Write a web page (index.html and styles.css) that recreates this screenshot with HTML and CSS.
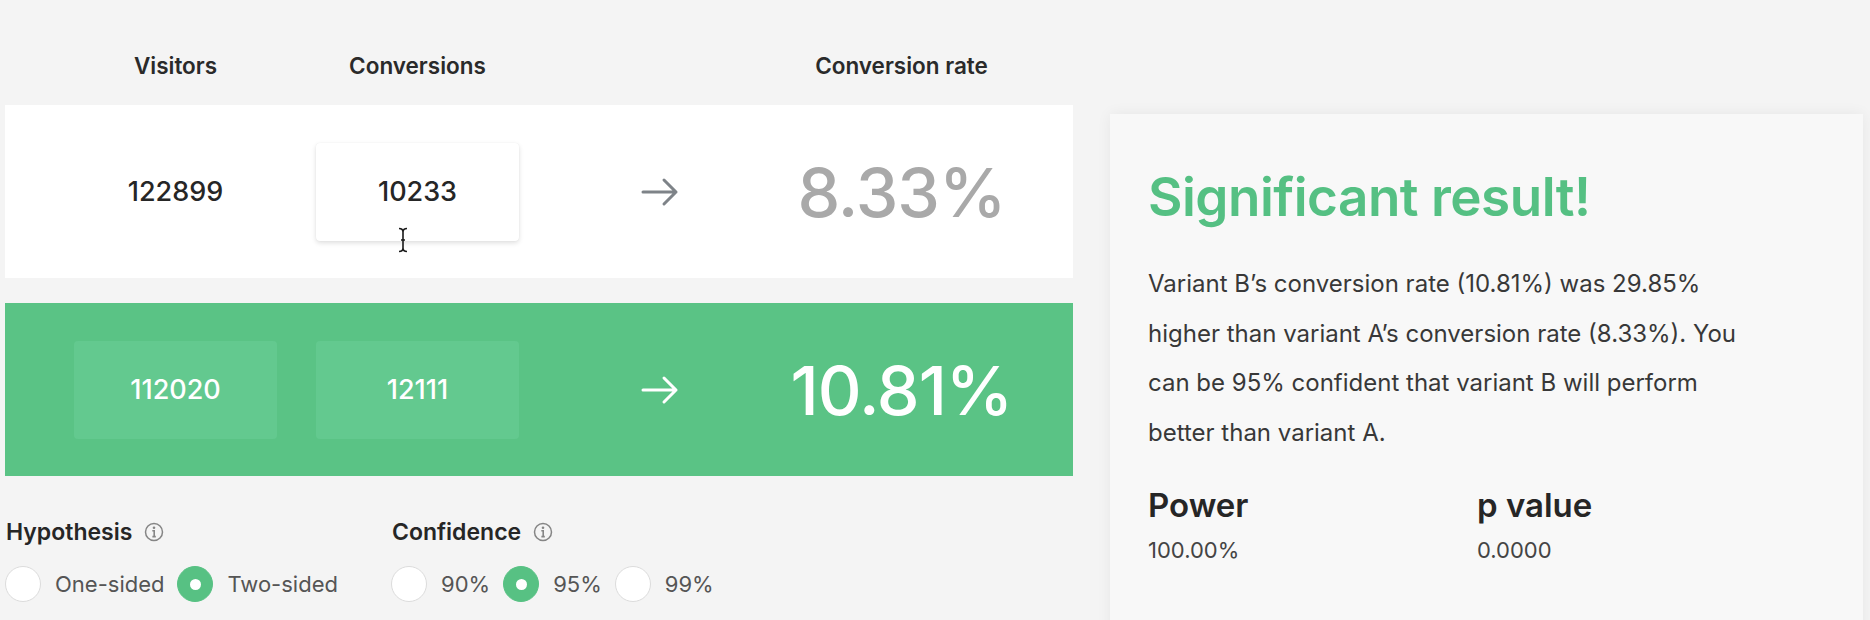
FILE: index.html
```html
<!DOCTYPE html>
<html>
<head>
<meta charset="utf-8">
<link rel="stylesheet" href="styles.css">
</head>
<body>
<div class="page">
  <div class="calc">
    <div class="grid head">
      <div class="hcell">Visitors</div>
      <div class="hcell">Conversions</div>
      <div class="hcell"></div>
      <div class="hcell">Conversion rate</div>
    </div>
    <div class="grid card card-a">
      <div class="cell num">122899</div>
      <div class="cell num input">10233
        <svg class="cursor" width="12" height="26" viewBox="0 0 12 26"><path d="M2 1.5 Q6 1.5 6 5 Q6 1.5 10 1.5 M6 5 V21 M2 24.5 Q6 24.5 6 21 Q6 24.5 10 24.5 M4 13 H8" fill="none" stroke="#1a1a1a" stroke-width="1.6"/></svg>
      </div>
      <div class="cell arrow">
        <svg width="38" height="30" viewBox="0 0 38 30"><path d="M2 15 H35 M23 3 L35 15 L23 27" fill="none" stroke="#7e8388" stroke-width="3" stroke-linecap="round" stroke-linejoin="round"/></svg>
      </div>
      <div class="cell rate rate-a">8.33%</div>
    </div>
    <div class="grid card card-b">
      <div class="cell num box">112020</div>
      <div class="cell num box">12111</div>
      <div class="cell arrow">
        <svg width="38" height="30" viewBox="0 0 38 30"><path d="M2 15 H35 M23 3 L35 15 L23 27" fill="none" stroke="#ffffff" stroke-width="3" stroke-linecap="round" stroke-linejoin="round"/></svg>
      </div>
      <div class="cell rate rate-b">10.81%</div>
    </div>
    <div class="options">
      <div class="group">
        <div class="glabel">Hypothesis <span class="info"><svg width="20" height="20" viewBox="0 0 20 20"><circle cx="10" cy="10" r="8.5" fill="none" stroke="#858585" stroke-width="1.5"/><circle cx="10" cy="5.8" r="1.3" fill="#858585"/><path d="M8.3 8.8 H10.2 V14.6 M8.4 14.6 H11.8" fill="none" stroke="#858585" stroke-width="1.6"/></svg></span></div>
        <div class="radios">
          <span class="radio"></span><span class="rlabel">One-sided</span>
          <span class="radio on"></span><span class="rlabel">Two-sided</span>
        </div>
      </div>
      <div class="group">
        <div class="glabel">Confidence <span class="info"><svg width="20" height="20" viewBox="0 0 20 20"><circle cx="10" cy="10" r="8.5" fill="none" stroke="#858585" stroke-width="1.5"/><circle cx="10" cy="5.8" r="1.3" fill="#858585"/><path d="M8.3 8.8 H10.2 V14.6 M8.4 14.6 H11.8" fill="none" stroke="#858585" stroke-width="1.6"/></svg></span></div>
        <div class="radios">
          <span class="radio"></span><span class="rlabel">90%</span>
          <span class="radio on"></span><span class="rlabel">95%</span>
          <span class="radio"></span><span class="rlabel">99%</span>
        </div>
      </div>
    </div>
  </div>
  <div class="result">
    <h1 class="title">Significant result!</h1>
    <p class="desc">Variant B’s conversion rate (10.81%) was 29.85%<br>higher than variant A’s conversion rate (8.33%). You<br>can be 95% confident that variant B will perform<br>better than variant A.</p>
    <div class="stats">
      <div class="stat">
        <div class="slabel">Power</div>
        <div class="sval">100.00%</div>
      </div>
      <div class="stat">
        <div class="slabel">p value</div>
        <div class="sval">0.0000</div>
      </div>
    </div>
  </div>
</div>
</body>
</html>
```

FILE: styles.css
```css
html, body {
  margin: 0;
  padding: 0;
  background: #f4f4f4;
  font-family: Inter, "Open Sans", sans-serif;
  color: #2b2b2b;
  overflow: hidden;
}

.page {
  display: flex;
  align-items: flex-start;
  gap: 37px;
  padding-left: 5px;
  height: 620px;
}

.calc {
  width: 1068px;
  flex: none;
}

.grid {
  display: grid;
  grid-template-columns: repeat(4, 203px);
  column-gap: 39px;
  padding-left: 69px;
}

.head {
  padding-top: 54px;
  height: 24px;
  margin-bottom: 27px;
}

.hcell {
  text-align: center;
  font-size: 22.5px;
  line-height: 24px;
  font-weight: 600;
  color: #2a2a2a;
  white-space: nowrap;
}

.card {
  height: 173px;
  align-items: center;
}

.card-a {
  background: #ffffff;
}

.card-b {
  background: #5ac385;
  margin-top: 25px;
}

.cell {
  display: flex;
  align-items: center;
  justify-content: center;
  height: 98px;
}

.num {
  font-size: 27px;
  font-weight: 500;
  color: #262626;
}

.input {
  position: relative;
  background: #fff;
  border-radius: 4px;
  box-shadow: 0 2px 5px rgba(0, 0, 0, 0.13), 0 0 1px rgba(0, 0, 0, 0.08);
}

.cursor {
  position: absolute;
  left: 81px;
  top: 84px;
}

.box {
  background: #63c98f;
  border-radius: 4px;
  color: #ffffff;
}

.rate {
  font-size: 68px;
  font-weight: 500;
  letter-spacing: -1px;
  white-space: nowrap;
}

.rate-a {
  color: #a9a9a9;
}

.rate-b {
  color: #ffffff;
}

.options {
  display: flex;
  margin-top: 44px;
}

.group {
  width: 386px;
}

.glabel {
  display: flex;
  align-items: center;
  font-size: 23px;
  line-height: 24px;
  font-weight: 600;
  color: #262626;
  padding-left: 1px;
  gap: 12px;
}

.info {
  display: flex;
}

.radios {
  display: flex;
  align-items: center;
  margin-top: 22px;
}

.radio {
  width: 36px;
  height: 36px;
  border-radius: 50%;
  background: #fff;
  border: 1px solid #dcdcdc;
  box-sizing: border-box;
  flex: none;
  margin-right: 14px;
  position: relative;
}

.radio.on {
  background: #57c183;
  border-color: #57c183;
}

.radio.on::after {
  content: "";
  position: absolute;
  left: 50%;
  top: 50%;
  width: 11px;
  height: 11px;
  margin: -5.5px 0 0 -5.5px;
  border-radius: 50%;
  background: #fff;
}

.rlabel {
  font-size: 22px;
  color: #555;
  margin-right: 13px;
}

.result {
  flex: none;
  width: 753px;
  height: 620px;
  margin-top: 114px;
  background: #f8f8f8;
  box-shadow: 0 0 14px rgba(0, 0, 0, 0.06);
  padding: 52px 38px 0 38px;
  box-sizing: border-box;
}

.title {
  margin: 0;
  font-size: 53px;
  line-height: 62px;
  font-weight: 600;
  color: #55c083;
  letter-spacing: -0.5px;
}

.desc {
  margin: 31px 0 0 0;
  font-size: 24px;
  line-height: 49.5px;
  color: #383838;
  white-space: nowrap;
}

.stats {
  display: flex;
  margin-top: 30px;
}

.stat {
  width: 329px;
}

.slabel {
  font-size: 33px;
  line-height: 36px;
  font-weight: 600;
  color: #262626;
}

.sval {
  margin-top: 14px;
  font-size: 22px;
  line-height: 26px;
  color: #444;
}
```
